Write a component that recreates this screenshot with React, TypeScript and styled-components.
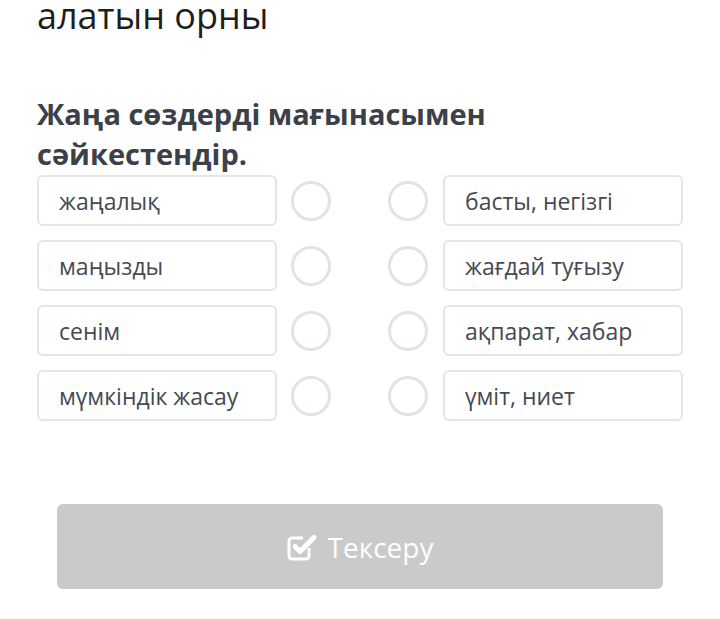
import React from "react";
import styled, { createGlobalStyle } from "styled-components";

const GlobalStyle = createGlobalStyle`
  html, body {
    margin: 0;
    padding: 0;
    background: #ffffff;
    font-family: "Open Sans", "Noto Sans", sans-serif;
  }
`;

const Page = styled.div`
  width: 720px;
  height: 619px;
  overflow: hidden;
  padding: 0 37px;
  box-sizing: border-box;
`;

const PrevTitle = styled.div`
  margin-top: -8px;
  font-size: 36px;
  line-height: 48px;
  color: #1e1e1e;
`;

const Question = styled.h2`
  margin: 54px 0 0;
  font-size: 29px;
  font-weight: 700;
  line-height: 40px;
  color: #3b4049;
`;

const Pairs = styled.div`
  margin-top: 1px;
  display: flex;
  flex-direction: column;
  gap: 14px;
`;

const PairRow = styled.div`
  display: flex;
  align-items: center;
`;

const Card = styled.div`
  width: 240px;
  height: 51px;
  flex: none;
  box-sizing: border-box;
  border: 2px solid #e3e5e8;
  border-radius: 6px;
  padding: 0 20px;
  display: flex;
  align-items: center;
  font-size: 23px;
  color: #444a52;
`;

const Middle = styled.div`
  flex: 1;
  display: flex;
  justify-content: space-between;
  padding: 0 15px 0 14px;
`;

const Dot = styled.div`
  width: 40px;
  height: 40px;
  box-sizing: border-box;
  border-radius: 50%;
  border: 3px solid #e1e4e7;
`;

const ButtonWrap = styled.div`
  margin-top: 83px;
  padding: 0 20px;
`;

const CheckButton = styled.button`
  width: 100%;
  height: 85px;
  border: none;
  border-radius: 6px;
  background: #cacaca;
  color: #ffffff;
  font-family: "Open Sans", "Noto Sans", sans-serif;
  font-size: 28px;
  display: flex;
  align-items: center;
  justify-content: center;
  gap: 10px;
  cursor: not-allowed;
`;

const left = ["жаңалық", "маңызды", "сенім", "мүмкіндік жасау"];
const right = ["басты, негізгі", "жағдай туғызу", "ақпарат, хабар", "үміт, ниет"];

const CheckSquareIcon = () => (
  <svg width="31" height="29" viewBox="0 0 31 29" fill="none">
    <path
      d="M22 16 V24 a3 3 0 0 1 -3 3 H5 a3 3 0 0 1 -3 -3 V9 a3 3 0 0 1 3 -3 H16"
      stroke="#ffffff"
      strokeWidth="3"
      strokeLinejoin="round"
    />
    <path
      d="M8 14.5 L13 19.5 L27 5.5"
      stroke="#ffffff"
      strokeWidth="5"
      strokeLinecap="round"
      strokeLinejoin="round"
    />
  </svg>
);

const App: React.FC = () => {
  return (
    <>
      <GlobalStyle />
      <Page>
        <PrevTitle>алатын орны</PrevTitle>
        <Question>
          Жаңа сөздерді мағынасымен
          <br />
          сәйкестендір.
        </Question>
        <Pairs>
          {left.map((word, i) => (
            <PairRow key={i}>
              <Card>{word}</Card>
              <Middle>
                <Dot />
                <Dot />
              </Middle>
              <Card>{right[i]}</Card>
            </PairRow>
          ))}
        </Pairs>
        <ButtonWrap>
          <CheckButton>
            <CheckSquareIcon />
            Тексеру
          </CheckButton>
        </ButtonWrap>
      </Page>
    </>
  );
};

export default App;
